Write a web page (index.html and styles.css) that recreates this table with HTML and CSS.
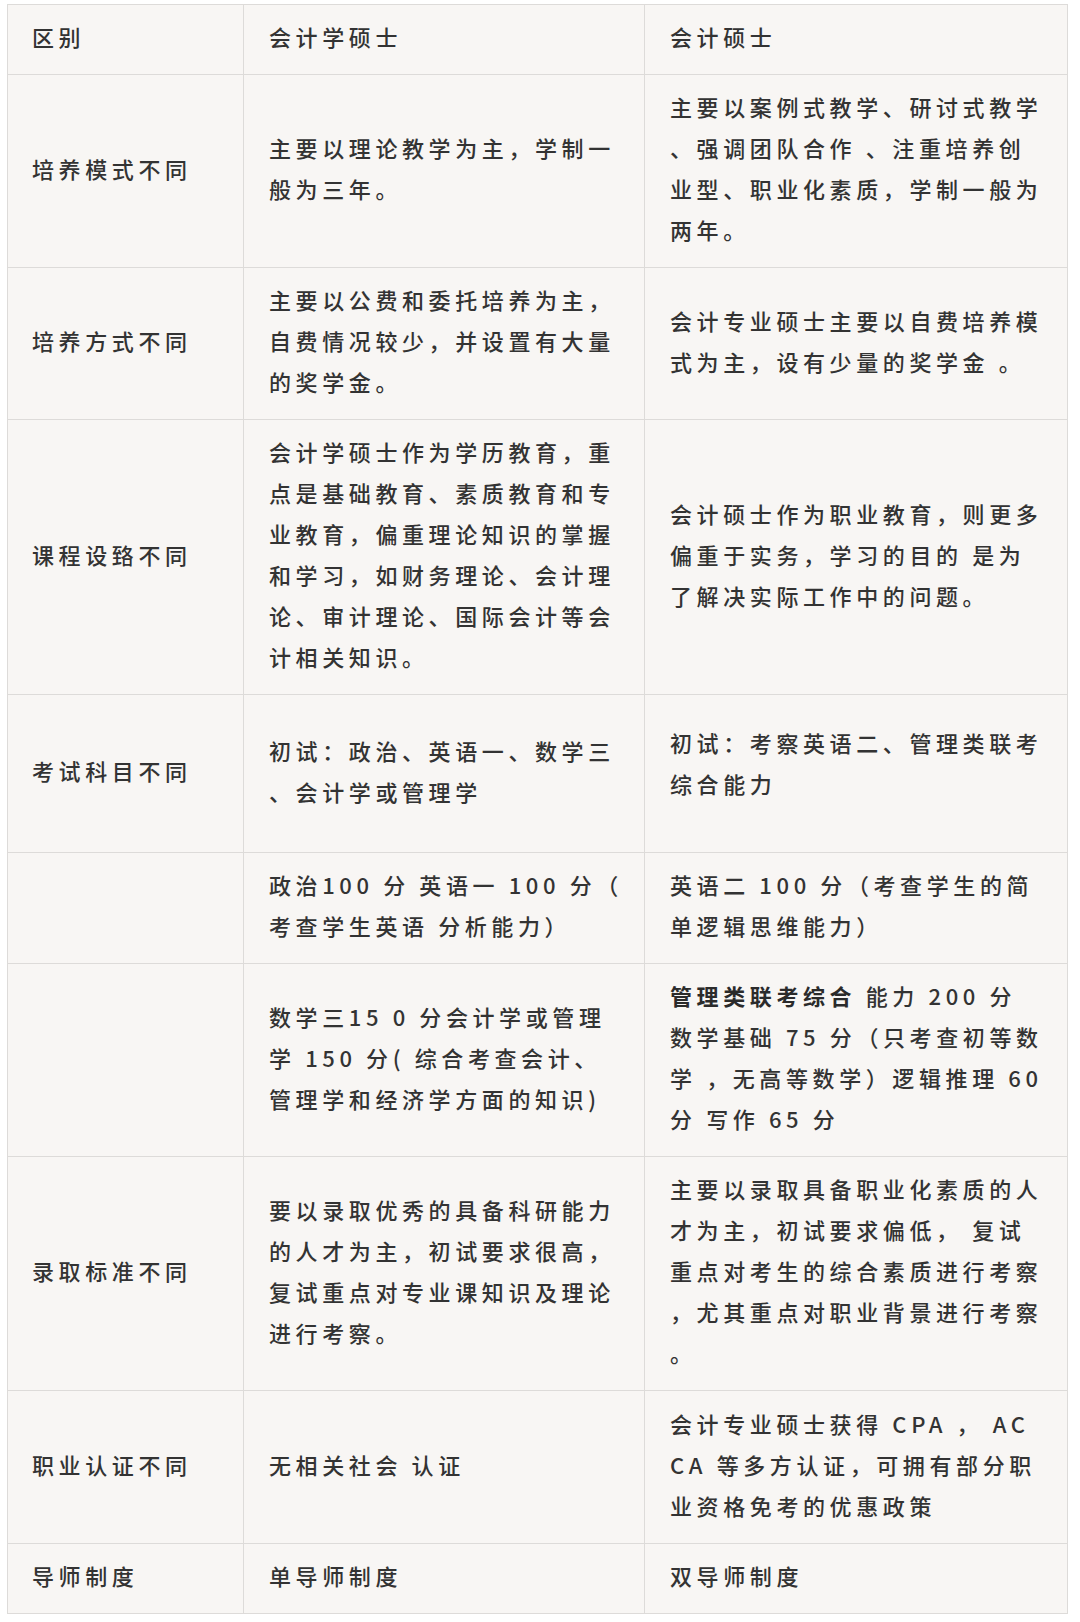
FILE: index.html
```html
<!DOCTYPE html>
<html lang="zh-CN">
<head>
<meta charset="utf-8">
<title>会计学硕士与会计硕士区别</title>
<link rel="stylesheet" href="styles.css">
</head>
<body>
<div class="wrap">
<table class="cmp">
  <colgroup>
    <col class="c1"><col class="c2"><col class="c3">
  </colgroup>
  <tr class="h0">
    <td>区别</td>
    <td>会计学硕士</td>
    <td>会计硕士</td>
  </tr>
  <tr class="h1">
    <td>培养模式不同</td>
    <td>主要以理论教学为主，学制一<br>般为三年。</td>
    <td>主要以案例式教学、研讨式教学<br>、强调团队合作 、注重培养创<br>业型、职业化素质，学制一般为<br>两年。</td>
  </tr>
  <tr class="h2">
    <td>培养方式不同</td>
    <td>主要以公费和委托培养为主，<br>自费情况较少，并设置有大量<br>的奖学金。</td>
    <td>会计专业硕士主要以自费培养模<br>式为主，设有少量的奖学金 。</td>
  </tr>
  <tr class="h3">
    <td>课程设臵不同</td>
    <td>会计学硕士作为学历教育，重<br>点是基础教育、素质教育和专<br>业教育，偏重理论知识的掌握<br>和学习，如财务理论、会计理<br>论、审计理论、国际会计等会<br>计相关知识。</td>
    <td>会计硕士作为职业教育，则更多<br>偏重于实务，学习的目的 是为<br>了解决实际工作中的问题。</td>
  </tr>
  <tr class="h4">
    <td>考试科目不同</td>
    <td>初试：政治、英语一、数学三<br>、会计学或管理学</td>
    <td class="up">初试：考察英语二、管理类联考<br>综合能力</td>
  </tr>
  <tr class="h5">
    <td></td>
    <td>政治100 分 英语一 100 分（<br>考查学生英语 分析能力）</td>
    <td>英语二 100 分（考查学生的简<br>单逻辑思维能力）</td>
  </tr>
  <tr class="h6">
    <td></td>
    <td>数学三15 0 分会计学或管理<br>学 150 分( 综合考查会计、<br>管理学和经济学方面的知识)</td>
    <td><b>管理类联考综合</b> 能力 200 分<br>数学基础 75 分（只考查初等数<br>学 ，无高等数学）逻辑推理 60<br>分 写作 65 分</td>
  </tr>
  <tr class="h7">
    <td>录取标准不同</td>
    <td>要以录取优秀的具备科研能力<br>的人才为主，初试要求很高，<br>复试重点对专业课知识及理论<br>进行考察。</td>
    <td>主要以录取具备职业化素质的人<br>才为主，初试要求偏低， 复试<br>重点对考生的综合素质进行考察<br>，尤其重点对职业背景进行考察<br>。</td>
  </tr>
  <tr class="h8">
    <td>职业认证不同</td>
    <td>无相关社会 认证</td>
    <td>会计专业硕士获得 CPA ， AC<br>CA 等多方认证，可拥有部分职<br>业资格免考的优惠政策</td>
  </tr>
  <tr class="h9">
    <td>导师制度</td>
    <td>单导师制度</td>
    <td>双导师制度</td>
  </tr>
</table>
</div>
</body>
</html>
```

FILE: styles.css
```css
html, body {
  margin: 0;
  padding: 0;
  background: #ffffff;
}
.wrap {
  padding: 4px 0 0 7px;
}
.cmp {
  border-collapse: collapse;
  table-layout: fixed;
  width: 1060px;
  background: #f8f6f4;
  font-family: "Noto Sans CJK SC", "Noto Sans", sans-serif;
  font-size: 22px;
  font-weight: 500;
  line-height: 41px;
  letter-spacing: 4.6px;
  color: #333333;
}
.c1 { width: 236px; }
.c2 { width: 401px; }
.c3 { width: 423px; }
.cmp td {
  border: 1px solid #dddbd9;
  padding: 11px 0 17px 25px;
  vertical-align: middle;
  white-space: nowrap;
  overflow: visible;
}
.cmp td:first-child { padding-left: 24px; }
.cmp b { font-weight: 700; color: #2b2b2b; }
.cmp td.up { padding-bottom: 33px; }
.h0 { height: 70px; }
.h1 { height: 192px; }
.h2 { height: 152px; }
.h3 { height: 273px; }
.h4 { height: 158px; }
.h5 { height: 111px; }
.h6 { height: 193px; }
.h7 { height: 232px; }
.h8 { height: 153px; }
.h9 { height: 70px; }
```
